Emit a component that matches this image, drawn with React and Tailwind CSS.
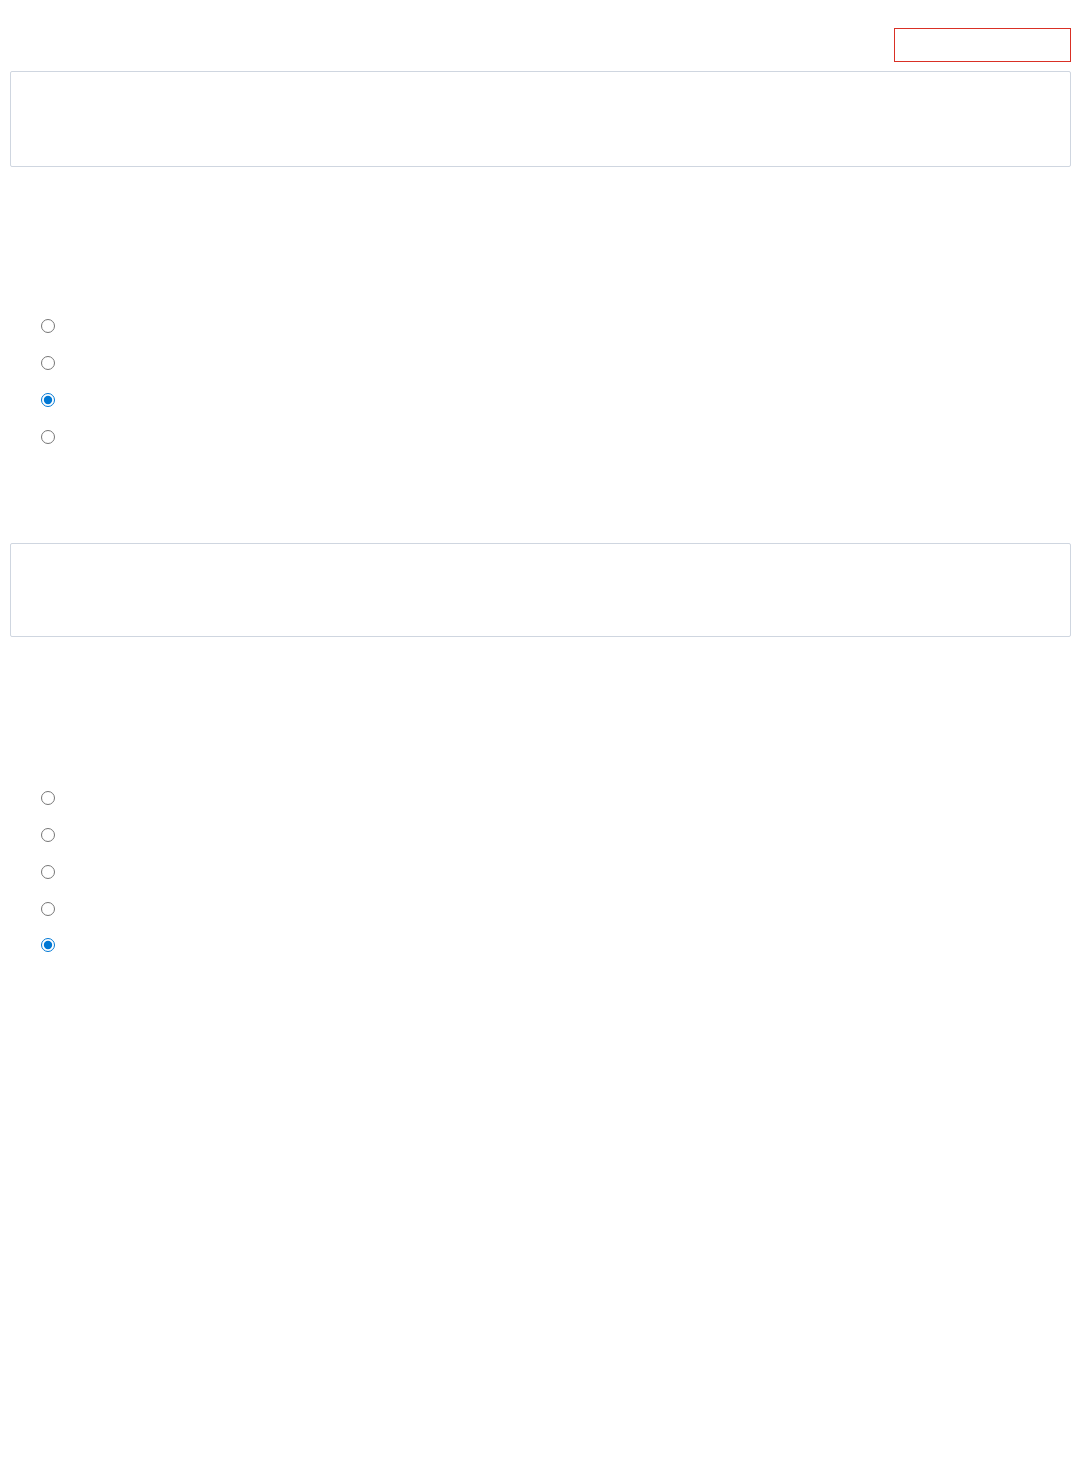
import React, { useState } from "react";

const RadioGroup = ({ name, count, initial }) => {
  const [selected, setSelected] = useState(initial);
  return (
    <div className="flex flex-col">
      {Array.from({ length: count }).map((_, i) => (
        <label key={i} className="flex items-center h-[36.75px] pl-[31px]">
          <input
            type="radio"
            name={name}
            className="w-[14px] h-[14px] accent-[#0078d4]"
            checked={selected === i}
            onChange={() => setSelected(i)}
          />
        </label>
      ))}
    </div>
  );
};

const App = () => {
  return (
    <div className="min-h-[1480px] bg-white pl-[10px] pr-[8px] font-['Liberation_Sans',sans-serif]">
      <div className="flex justify-end pt-[28px]">
        <div className="w-[177px] h-[34px] border border-[#d93025]"></div>
      </div>
      <div className="mt-[9px] h-[96px] border border-[#cfd6e0] rounded-[2px]"></div>
      <div className="mt-[141px]">
        <RadioGroup name="q1" count={4} initial={2} />
      </div>
      <div className="mt-[88px] h-[94px] border border-[#cfd6e0] rounded-[2px]"></div>
      <div className="mt-[143px]">
        <RadioGroup name="q2" count={5} initial={4} />
      </div>
    </div>
  );
};

export default App;
